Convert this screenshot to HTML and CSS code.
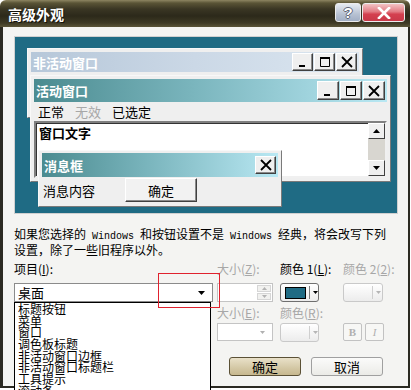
FILE: index.html
```html
<!DOCTYPE html>
<html>
<head>
    <title>高级外观</title>
    <link rel="stylesheet" href="styles.css">
</head>
<body>
    <div class="dialog">
        <div class="titlebar">
            <span class="title">高级外观</span>
            <div class="title-btns">
                <span class="tbtn help">?</span>
                <span class="tbtn close">
                    <svg width="14" height="12" viewBox="0 0 14 12"><path d="M2 1l10 10M12 1L2 11" stroke="#fff" stroke-width="2.6" stroke-linecap="square"/></svg>
                </span>
            </div>
        </div>

        <div class="body">
            <div class="preview">
                <div class="win inactive">
                    <div class="caption">
                        <span>非活动窗口</span>
                        <div class="capbtns">
                            <span class="cbtn"><svg width="16" height="14" viewBox="0 0 16 14"><rect x="4" y="10" width="6" height="2"/></svg></span>
                            <span class="cbtn"><svg width="16" height="14" viewBox="0 0 16 14"><path d="M3.5 2.5h9v9h-9z" fill="none" stroke="#000"/><rect x="3" y="2" width="10" height="2"/></svg></span>
                            <span class="cbtn"><svg width="16" height="14" viewBox="0 0 16 14"><path d="M3 2l10 10M13 2L3 12" stroke="#000" stroke-width="1.8"/></svg></span>
                        </div>
                    </div>
                </div>

                <div class="win active">
                    <div class="caption">
                        <span>活动窗口</span>
                        <div class="capbtns">
                            <span class="cbtn"><svg width="16" height="14" viewBox="0 0 16 14"><rect x="4" y="10" width="6" height="2"/></svg></span>
                            <span class="cbtn"><svg width="16" height="14" viewBox="0 0 16 14"><path d="M3.5 2.5h9v9h-9z" fill="none" stroke="#000"/><rect x="3" y="2" width="10" height="2"/></svg></span>
                            <span class="cbtn"><svg width="16" height="14" viewBox="0 0 16 14"><path d="M3 2l10 10M13 2L3 12" stroke="#000" stroke-width="1.8"/></svg></span>
                        </div>
                    </div>
                    <div class="menubar">
                        <span>正常</span>
                        <span class="dis">无效</span>
                        <span>已选定</span>
                    </div>
                    <div class="textarea">
                        <span class="wtext">窗口文字</span>
                        <div class="vscroll">
                            <span class="sbtn"><svg width="7" height="4" viewBox="0 0 7 4"><path d="M0 4h7L3.5 0z"/></svg></span>
                            <span class="track"></span>
                            <span class="sbtn"><svg width="7" height="4" viewBox="0 0 7 4"><path d="M0 0h7L3.5 4z"/></svg></span>
                        </div>
                    </div>
                </div>

                <div class="win msgbox">
                    <div class="caption">
                        <span>消息框</span>
                        <div class="capbtns">
                            <span class="cbtn"><svg width="16" height="14" viewBox="0 0 16 14"><path d="M3 2l10 10M13 2L3 12" stroke="#000" stroke-width="1.8"/></svg></span>
                        </div>
                    </div>
                    <div class="msgbody">
                        <span>消息内容</span>
                        <span class="pbtn">确定</span>
                    </div>
                </div>
            </div>

            <p class="note">如果您选择的<span class="en"> Windows </span>和按钮设置不是<span class="en"> Windows </span>经典，将会改写下列设置，除了一些旧程序以外。</p>

            <div class="fields">
                <div class="item-col">
                    <span class="lbl">项目(<u>I</u>):</span>
                    <div class="combo">
                        <span>桌面</span>
                        <svg width="7" height="4" viewBox="0 0 7 4"><path d="M0 0h7L3.5 4z"/></svg>
                    </div>
                    <ul class="droplist">
                        <li>标题按钮</li>
                        <li>菜单</li>
                        <li>窗口</li>
                        <li>调色板标题</li>
                        <li>非活动窗口边框</li>
                        <li>非活动窗口标题栏</li>
                        <li>工具提示</li>
                        <li>滚动条</li>
                    </ul>
                </div>

                <div class="opts">
                    <span class="lbl dis">大小(<u>Z</u>):</span>
                    <span class="lbl">颜色 1(<u>L</u>):</span>
                    <span class="lbl dis">颜色 2(<u>2</u>):</span>

                    <div class="spin">
                        <div class="spinbtns">
                            <span><svg width="5" height="3" viewBox="0 0 5 3"><path d="M0 3h5L2.5 0z"/></svg></span>
                            <span><svg width="5" height="3" viewBox="0 0 5 3"><path d="M0 0h5L2.5 3z"/></svg></span>
                        </div>
                    </div>
                    <div class="colorbtn">
                        <span class="swatch"></span>
                        <span class="sep"></span>
                        <svg width="5" height="3" viewBox="0 0 5 3"><path d="M0 0h5L2.5 3z"/></svg>
                    </div>
                    <div class="colorbtn off wide">
                        <span class="blank"></span>
                        <span class="sep"></span>
                        <svg width="5" height="3" viewBox="0 0 5 3"><path d="M0 0h5L2.5 3z"/></svg>
                    </div>

                    <span class="lbl dis row2">大小(<u>E</u>):</span>
                    <span class="lbl dis row2">颜色(<u>R</u>):</span>
                    <span class="row2"></span>

                    <div class="combo off">
                        <svg width="5" height="3" viewBox="0 0 5 3"><path d="M0 0h5L2.5 3z"/></svg>
                    </div>
                    <div class="colorbtn off">
                        <span class="blank"></span>
                        <span class="sep"></span>
                        <svg width="5" height="3" viewBox="0 0 5 3"><path d="M0 0h5L2.5 3z"/></svg>
                    </div>
                    <div class="fontbtns">
                        <span class="fbtn bold">B</span>
                        <span class="fbtn ital">I</span>
                    </div>
                </div>
            </div>

            <div class="actions">
                <span class="btn default">确定</span>
                <span class="btn">取消</span>
            </div>

            <div class="mark"></div>
        </div>
    </div>
</body>
</html>
```

FILE: styles.css
```css
html, body {
    margin: 0;
    padding: 0;
    overflow: hidden;
}

body {
    width: 411px;
    height: 390px;
    background: #ffffff;
    font-family: "Noto Sans CJK SC", sans-serif;
    font-size: 12px;
    color: #000;
}

.dialog {
    width: 410px;
    height: 388px;
    display: flex;
    flex-direction: column;
}

/* 标题栏 */
.titlebar {
    height: 27px;
    flex: none;
    box-sizing: border-box;
    display: flex;
    justify-content: space-between;
    padding: 0 5px 0 8px;
    border-radius: 6px 6px 0 0;
    background: linear-gradient(#8d8562 0, #5a5436 3px, #3a3624 9px, #2c291a 16px, #3e3a25 23px, #5b5538 27px);
}

.title {
    color: #fff;
    font-weight: bold;
    font-size: 14px;
    line-height: 29px;
    text-shadow: 1px 1px 0 #15130a;
}

.title-btns {
    display: flex;
    gap: 1px;
    margin-top: 3px;
    height: 19px;
}

.tbtn {
    box-sizing: border-box;
    height: 19px;
    border: 1px solid #ececec;
    border-radius: 3px;
    display: flex;
    align-items: center;
    justify-content: center;
}

.help {
    width: 26px;
    background: linear-gradient(#e6ebf2, #b7c1d2 60%, #a2afc5);
    color: #fff;
    font-weight: bold;
    font-size: 15px;
    font-family: "Liberation Sans", sans-serif;
    text-shadow: 1px 0 0 #5d6476, -1px 0 0 #5d6476, 0 1px 0 #5d6476, 0 -1px 0 #5d6476;
}

.close {
    width: 43px;
    background: linear-gradient(#f3c3c4, #e27c84 45%, #d4404f 60%, #c93949);
}

.body {
    flex: 1;
    position: relative;
    background: #f4f4f2;
    border-style: solid;
    border-color: #2b2a22;
    border-width: 0 2px 2px 3px;
}

/* 预览区域 */
.preview {
    position: relative;
    margin: 9px 0 0 11px;
    width: 382px;
    height: 176px;
    border: 1px solid #d0d0d0;
    background: #1f6b84;
}

.win {
    position: absolute;
    box-sizing: border-box;
    background: #efefef;
    border: 1px solid;
    border-color: #f8f8f8 #7a7a7a #7a7a7a #f8f8f8;
    padding: 3px;
}

.inactive {
    left: 12px;
    top: 11px;
    width: 336px;
    height: 70px;
}

.active {
    left: 15px;
    top: 38px;
    width: 361px;
    height: 107px;
}

.msgbox {
    left: 23px;
    top: 113px;
    width: 244px;
    height: 57px;
    padding-top: 2px;
}

.caption {
    height: 20px;
    display: flex;
    align-items: center;
    justify-content: space-between;
    padding: 0 2px 0 2px;
    color: #fff;
    font-weight: bold;
    font-size: 13px;
    background: linear-gradient(to right, #4b8b90, #7ab5bd 45%, #b9e8f3);
}

.inactive .caption {
    background: linear-gradient(to right, #b6c7d9, #cbd8e6 50%, #dbe6f0);
}

.active .caption {
    height: 23px;
}

.msgbox .caption {
    height: 24px;
}

.capbtns {
    display: flex;
    gap: 1px;
}

.cbtn {
    box-sizing: border-box;
    width: 21px;
    height: 18px;
    display: flex;
    align-items: center;
    justify-content: center;
    background: #efefef;
    border: 1px solid;
    border-color: #ffffff #404040 #404040 #ffffff;
    box-shadow: inset -1px -1px 0 #8a8a8a;
}

.active .cbtn {
    width: 22px;
    height: 19px;
}

.menubar {
    height: 19px;
    display: flex;
    align-items: center;
    gap: 11px;
    padding-left: 4px;
    font-size: 13px;
}

.dis {
    color: #a7a7a7;
}

.textarea {
    height: 57px;
    box-sizing: border-box;
    background: #fff;
    border: 2px solid;
    border-color: #7f7f7f #f0f0f0 #f0f0f0 #7f7f7f;
    box-shadow: inset 1px 1px 0 #333;
    display: flex;
    justify-content: space-between;
    padding-left: 3px;
}

.wtext {
    font-weight: bold;
    font-size: 13px;
    line-height: 20px;
}

.vscroll {
    width: 17px;
    display: flex;
    flex-direction: column;
}

.sbtn {
    box-sizing: border-box;
    height: 16px;
    display: flex;
    align-items: center;
    justify-content: center;
    background: #efefef;
    border: 1px solid;
    border-color: #fff #404040 #404040 #fff;
}

.track {
    flex: 1;
    background: #d8d6d0;
}

.msgbody {
    height: 26px;
    display: flex;
    align-items: center;
    font-size: 13px;
    padding-left: 1px;
}

.pbtn {
    box-sizing: border-box;
    width: 72px;
    height: 24px;
    margin-left: 30px;
    display: flex;
    align-items: center;
    justify-content: center;
    background: #f2f2f2;
    border: 1px solid;
    border-color: #ffffff #404040 #404040 #ffffff;
    box-shadow: inset -1px -1px 0 #8a8a8a;
}

/* 说明文字 */
.note {
    margin: 12px 0 0 11px;
    width: 373px;
    height: 30px;
    line-height: 15px;
    font-size: 12px;
}

.en {
    font-family: "Liberation Mono", monospace;
    font-size: 10px;
    line-height: 10px;
    white-space: pre;
}

/* 项目与选项 */
.fields {
    display: flex;
    margin-top: 5px;
}

.item-col {
    position: relative;
    margin-left: 11px;
    width: 199px;
}

.lbl {
    display: block;
    height: 15px;
    line-height: 15px;
    margin-bottom: 7px;
    white-space: nowrap;
}

.lbl u {
    text-underline-offset: 1px;
}

.combo {
    box-sizing: border-box;
    height: 19px;
    background: #fff;
    border: 1px solid #8b8b8b;
    display: flex;
    align-items: center;
    justify-content: space-between;
    padding: 0 7px 0 3px;
    font-size: 13px;
}

.droplist {
    position: absolute;
    left: 0;
    top: 41px;
    width: 197px;
    height: 96px;
    box-sizing: border-box;
    margin: 0;
    padding: 0 0 0 3px;
    list-style: none;
    background: #fff;
    border: 1px solid #000;
    overflow: hidden;
    font-size: 12px;
    line-height: 11.7px;
}

.droplist li {
    height: 11.7px;
    white-space: nowrap;
}

.opts {
    margin-left: 4px;
    display: grid;
    grid-template-columns: 63px 63px 41px;
    align-items: start;
}

.row2 {
    margin-top: 3px;
    margin-bottom: 3px;
}

.spin {
    box-sizing: border-box;
    width: 56px;
    height: 19px;
    background: #fff;
    border: 1px solid #c4c4c4;
    display: flex;
    justify-content: flex-end;
    padding: 1px;
}

.spinbtns {
    width: 14px;
    display: flex;
    flex-direction: column;
    gap: 1px;
}

.spinbtns span {
    flex: 1;
    display: flex;
    align-items: center;
    justify-content: center;
    background: #f1f1ef;
    border: 1px solid #d6d6d6;
    fill: #b3b3b3;
}

.colorbtn {
    box-sizing: border-box;
    width: 39px;
    height: 19px;
    border: 1px solid #6f6f6f;
    border-radius: 3px;
    background: linear-gradient(#ffffff, #ececec);
    display: flex;
    align-items: center;
    padding-left: 4px;
}

.colorbtn.wide {
    width: 40px;
}

.swatch {
    box-sizing: border-box;
    width: 21px;
    height: 12px;
    background: #1f6b84;
    border: 1px solid #000;
}

.blank {
    width: 21px;
    height: 12px;
}

.sep {
    width: 1px;
    height: 13px;
    background: #7d7d7d;
    margin: 0 3px 0 3px;
}

.colorbtn.off {
    border-color: #c9c9c9;
    fill: #b5b5b5;
}

.colorbtn.off .sep {
    background: #cfcfcf;
}

.combo.off {
    width: 56px;
    height: 18px;
    border-color: #c4c4c4;
    justify-content: flex-end;
    padding-right: 7px;
    fill: #b0b0b0;
}

.fontbtns {
    display: flex;
    gap: 3px;
}

.fbtn {
    box-sizing: border-box;
    width: 19px;
    height: 18px;
    border: 1px solid #c2c2c2;
    border-radius: 2px;
    background: #f7f7f5;
    display: flex;
    align-items: center;
    justify-content: center;
    color: #b0b0b0;
    font-family: "Liberation Serif", serif;
    font-size: 11px;
}

.bold {
    font-weight: bold;
}

.ital {
    font-style: italic;
}

/* 按钮 */
.actions {
    display: flex;
    justify-content: flex-end;
    gap: 10px;
    padding-right: 25px;
    margin-top: 15px;
}

.btn {
    box-sizing: border-box;
    width: 72px;
    height: 19px;
    display: flex;
    align-items: center;
    justify-content: center;
    font-size: 13px;
    border: 1px solid #a0a0a0;
    border-radius: 3px;
    background: linear-gradient(#fbfbfa, #ebebe7);
}

.btn.default {
    border-color: #5b5136;
    background: linear-gradient(#e9e1c9, #d3c7a4 60%, #c7b88f);
}

/* 红色标记框 */
.mark {
    position: absolute;
    left: 155px;
    top: 246px;
    width: 60px;
    height: 33px;
    border: 1px solid #e0222e;
}
```
